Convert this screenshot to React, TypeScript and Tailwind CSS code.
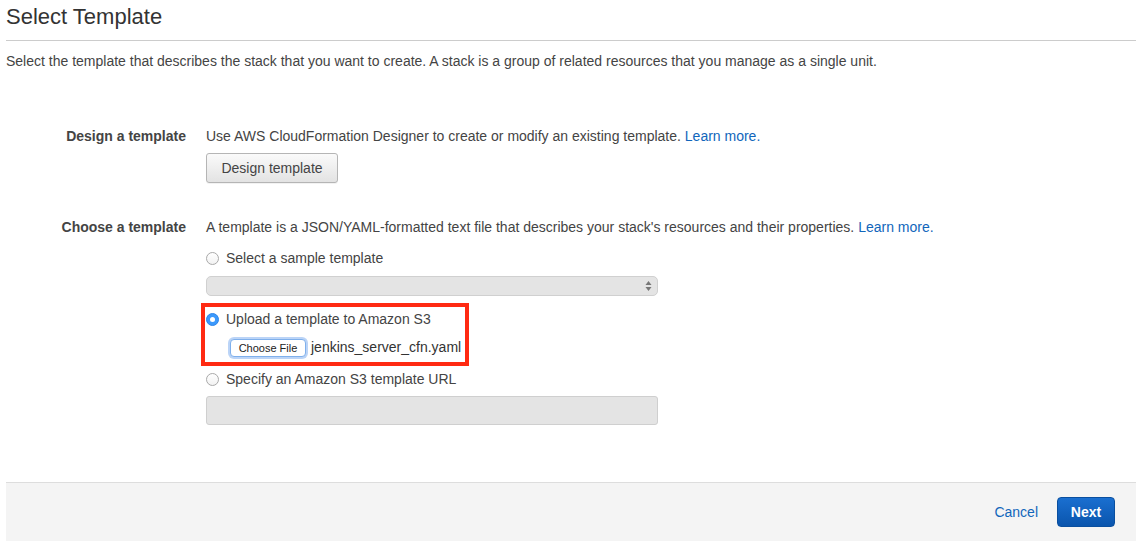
import React from 'react';

const font = { fontFamily: '"Liberation Sans", Arial, sans-serif' };

const Radio = ({ checked }: { checked?: boolean }) =>
  checked ? (
    <span className="w-[13px] h-[13px] rounded-full bg-[#3b99fc] border border-[#2f86e8] flex items-center justify-center shrink-0">
      <span className="w-[5px] h-[5px] rounded-full bg-white" />
    </span>
  ) : (
    <span className="w-[13px] h-[13px] rounded-full border border-[#a9a9a9] bg-gradient-to-b from-white to-[#f2f2f2] shrink-0" />
  );

const RadioRow = ({ label, checked }: { label: string; checked?: boolean }) => (
  <label className="flex items-center gap-[7px] h-[18px] leading-[18px]">
    <Radio checked={checked} />
    <span>{label}</span>
  </label>
);

export default function App() {
  return (
    <div style={font} className="bg-white text-[14px] text-[#444] pl-[6px] pr-[7px] min-h-[548px]">
      <h1 className="text-[22px] leading-[26px] pt-[4px] pb-[10px] text-[#333] border-b border-[#cccccc]">
        Select Template
      </h1>
      <p className="mt-[11px] leading-[18px]">
        Select the template that describes the stack that you want to create. A stack is a group of related resources that you manage as a single unit.
      </p>

      <div className="grid grid-cols-[180px_1fr] gap-x-[20px] mt-[57px]">
        <div className="text-right font-bold leading-[18px] text-[#444]">Design a template</div>
        <div className="flex flex-col items-start">
          <div className="leading-[18px]">
            Use AWS CloudFormation Designer to create or modify an existing template.{' '}
            <a className="text-[#1166bb]">Learn more.</a>
          </div>
          <button className="mt-[8px] h-[30px] w-[132px] rounded-[3px] border border-[#b5b5b5] bg-gradient-to-b from-[#fafafa] to-[#e3e3e3] text-[#444] shadow-[0_1px_0_rgba(0,0,0,0.05)]">
            Design template
          </button>
        </div>

        <div className="text-right font-bold leading-[18px] text-[#444] mt-[35px]">Choose a template</div>
        <div className="flex flex-col items-start mt-[35px]">
          <div className="leading-[18px]">
            A template is a JSON/YAML-formatted text file that describes your stack's resources and their properties.{' '}
            <a className="text-[#1166bb]">Learn more.</a>
          </div>
          <div className="mt-[13px]">
            <RadioRow label="Select a sample template" />
          </div>
          <div className="mt-[9px] h-[20px] w-[452px] rounded-[5px] border border-[#d0d0d0] bg-[#e4e4e4] flex items-center justify-end pr-[5px]">
            <svg width="7" height="12" viewBox="0 0 7 12">
              <path d="M3.5 1 L6.5 5 L0.5 5 Z" fill="#777" />
              <path d="M3.5 11 L6.5 7 L0.5 7 Z" fill="#777" />
            </svg>
          </div>
          <div className="-ml-[5px] mt-[7px] w-[268px] border-[4px] border-[#ff2a12] pl-[1px] pt-[3px] pb-[4px]">
            <RadioRow label="Upload a template to Amazon S3" checked />
            <div className="mt-[9px] flex items-center ml-[24px] gap-[5px]">
              <button className="h-[18px] w-[76px] rounded-[4px] bg-white border border-[#7fb0ec] shadow-[0_0_0_2px_rgba(120,170,240,0.5)] text-[11px] leading-[16px] text-[#222]">
                Choose File
              </button>
              <span className="text-[#333]">jenkins_server_cfn.yaml</span>
            </div>
          </div>
          <div className="mt-[4px]">
            <RadioRow label="Specify an Amazon S3 template URL" />
          </div>
          <div className="mt-[8px] h-[29px] w-[452px] rounded-[3px] border border-[#cfcfcf] bg-[#e4e4e4]" />
        </div>
      </div>

      <div className="mt-[57px] h-[59px] border-t border-[#dddddd] bg-[#f4f4f4] flex items-center justify-end pr-[21px] gap-[19px]">
        <a className="text-[#1166bb] text-[14px]">Cancel</a>
        <button className="h-[30px] w-[58px] rounded-[4px] bg-gradient-to-b from-[#1a6fd0] to-[#0a55ad] border border-[#0a4f9f] text-white font-bold text-[14px]">
          Next
        </button>
      </div>
    </div>
  );
}
